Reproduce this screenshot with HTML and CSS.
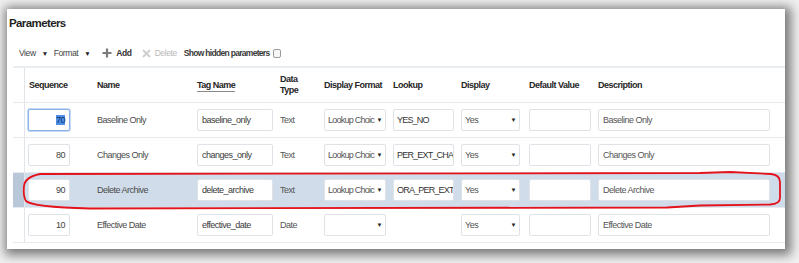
FILE: index.html
```html
<!DOCTYPE html>
<html lang="en">
<head>
    <meta charset="UTF-8">
    <title>Parameters</title>
    <link rel="stylesheet" href="styles.css">
</head>
<body>
    <div class="page">
        <div class="panel">
            <div class="title">Parameters</div>

            <div class="toolbar">
                <span class="menu">View</span>
                <span class="caret">▼</span>
                <span class="menu menu-format">Format</span>
                <span class="caret">▼</span>
                <span class="tool tool-add">
                    <svg width="10" height="10" viewBox="0 0 10 10"><path d="M5 0.5v9M0.5 5h9" stroke="#7b7b7b" stroke-width="2.2"/></svg>
                    Add
                </span>
                <span class="tool tool-delete">
                    <svg width="9" height="9" viewBox="0 0 9 9"><path d="M1 1l7 7M8 1l-7 7" stroke="#cfcfcf" stroke-width="2"/></svg>
                    Delete
                </span>
                <span class="tool tool-hidden">Show hidden parameters</span>
                <span class="checkbox"></span>
            </div>

            <div class="table">
                <div class="row head">
                    <div class="gutter"></div>
                    <div class="th th-seq">Sequence</div>
                    <div class="th">Name</div>
                    <div class="th"><span class="sortable">Tag Name</span></div>
                    <div class="th th-two">Data<br>Type</div>
                    <div class="th">Display Format</div>
                    <div class="th">Lookup</div>
                    <div class="th">Display</div>
                    <div class="th">Default Value</div>
                    <div class="th">Description</div>
                </div>

                <div class="row">
                    <div class="gutter"></div>
                    <div class="cell"><div class="field seq focused"><span class="selected-text">70</span></div></div>
                    <div class="cell name">Baseline Only</div>
                    <div class="cell"><div class="field tag">baseline_only</div></div>
                    <div class="cell type">Text</div>
                    <div class="cell"><div class="field select fmt"><span class="value">Lookup Choic</span><span class="arrow">▼</span></div></div>
                    <div class="cell"><div class="field lookup">YES_NO</div></div>
                    <div class="cell"><div class="field select disp"><span class="value">Yes</span><span class="arrow">▼</span></div></div>
                    <div class="cell"><div class="field def"></div></div>
                    <div class="cell"><div class="field desc">Baseline Only</div></div>
                </div>

                <div class="row">
                    <div class="gutter"></div>
                    <div class="cell"><div class="field seq">80</div></div>
                    <div class="cell name">Changes Only</div>
                    <div class="cell"><div class="field tag">changes_only</div></div>
                    <div class="cell type">Text</div>
                    <div class="cell"><div class="field select fmt"><span class="value">Lookup Choic</span><span class="arrow">▼</span></div></div>
                    <div class="cell"><div class="field lookup">PER_EXT_CHA</div></div>
                    <div class="cell"><div class="field select disp"><span class="value">Yes</span><span class="arrow">▼</span></div></div>
                    <div class="cell"><div class="field def"></div></div>
                    <div class="cell"><div class="field desc">Changes Only</div></div>
                </div>

                <div class="row active">
                    <div class="gutter"></div>
                    <div class="cell"><div class="field seq">90</div></div>
                    <div class="cell name">Delete Archive</div>
                    <div class="cell"><div class="field tag">delete_archive</div></div>
                    <div class="cell type">Text</div>
                    <div class="cell"><div class="field select fmt"><span class="value">Lookup Choic</span><span class="arrow">▼</span></div></div>
                    <div class="cell"><div class="field lookup">ORA_PER_EXT</div></div>
                    <div class="cell"><div class="field select disp"><span class="value">Yes</span><span class="arrow">▼</span></div></div>
                    <div class="cell"><div class="field def"></div></div>
                    <div class="cell"><div class="field desc">Delete Archive</div></div>
                </div>

                <div class="row">
                    <div class="gutter"></div>
                    <div class="cell"><div class="field seq">10</div></div>
                    <div class="cell name">Effective Date</div>
                    <div class="cell"><div class="field tag">effective_date</div></div>
                    <div class="cell type">Date</div>
                    <div class="cell"><div class="field select fmt"><span class="value"></span><span class="arrow">▼</span></div></div>
                    <div class="cell"></div>
                    <div class="cell"><div class="field select disp"><span class="value">Yes</span><span class="arrow">▼</span></div></div>
                    <div class="cell"><div class="field def"></div></div>
                    <div class="cell"><div class="field desc">Effective Date</div></div>
                </div>
            </div>
        </div>

        <!-- hand-drawn highlight around the Delete Archive row -->
        <svg class="markup" width="799" height="263" viewBox="0 0 799 263">
            <path d="M40 174 L700 173 L730 172 L771 174 Q780 175 780 182 L780 198 Q780 204 770 204.5 L700 205.5 L667 207.5 L90 208.5 Q32 207 26 201 Q23 196 24 186 Q25 177 40 174 Z"
                  fill="none" stroke="#e3121b" stroke-width="1.8"/>
        </svg>
    </div>
</body>
</html>
```

FILE: styles.css
```css
* {
    margin: 0;
    padding: 0;
    box-sizing: border-box;
    font-family: 'Liberation Sans', Arial, sans-serif;
}

body {
    background: #f1f1f1;
    overflow: hidden;
}

.page {
    position: relative;
    width: 799px;
    height: 263px;
    padding: 9px 0 0 7px;
}

.panel {
    width: 778px;
    height: 240px;
    background: #ffffff;
    box-shadow: 2px 2px 10px 4px rgba(0, 0, 0, 0.5);
}

.title {
    padding: 7px 0 0 2px;
    font-size: 11.5px;
    line-height: 14px;
    letter-spacing: -0.6px;
    font-weight: bold;
    color: #1f1f1f;
}

/* toolbar */
.toolbar {
    display: flex;
    align-items: center;
    height: 16px;
    margin-top: 15px;
    padding-left: 12px;
    font-size: 8.5px;
    letter-spacing: -0.4px;
    color: #333333;
}

.menu {
    color: #444444;
}

.caret {
    font-size: 6.5px;
    margin-left: 6px;
    color: #222222;
}

.menu-format {
    margin-left: 6px;
}

.tool {
    display: flex;
    align-items: center;
    gap: 4px;
    font-weight: bold;
    color: #333333;
}

.tool-add {
    margin-left: 12px;
}

.tool-delete {
    margin-left: 10px;
    font-weight: normal;
    color: #b8b8b8;
}

.tool-hidden {
    margin-left: 7px;
    letter-spacing: -0.7px;
    color: #3a3a3a;
}

.checkbox {
    width: 8px;
    height: 9px;
    margin-left: 4px;
    border: 1px solid #9a9a9a;
    border-radius: 2px;
    background: #f6f6f6;
}

/* table */
.table {
    margin: 5px 0 0 6px;
}

.row {
    display: grid;
    grid-template-columns: 12px 72px 100px 83px 44px 69px 68px 68px 69px 1fr;
    align-items: center;
    height: 35px;
    border-bottom: 1px solid #e6eaee;
    font-size: 9px;
    letter-spacing: -0.5px;
    color: #444444;
}

.row.head {
    height: 37px;
    border-top: 2px solid #e8edf2;
    border-bottom: 1px solid #e6eaee;
}

.gutter {
    align-self: stretch;
    border-right: 1px solid #e1e5ea;
}

.row.active {
    background: #d0dcea;
}

.row.active .gutter {
    background: #b8c8d9;
}

.th {
    font-weight: bold;
    color: #262626;
}

.th-seq {
    padding-left: 4px;
}

.th-two {
    line-height: 11px;
}

.sortable {
    padding-bottom: 1px;
    border-bottom: 1px solid #8a8a8a;
}

.cell {
    white-space: nowrap;
}

.name {
    color: #4a4a4a;
}

.type {
    color: #555555;
}

.field {
    height: 22px;
    display: flex;
    align-items: center;
    padding: 0 4px;
    background: #ffffff;
    border: 1px solid #dfe3e7;
    border-radius: 2px;
    overflow: hidden;
    white-space: nowrap;
    color: #3a3a3a;
}

.seq {
    width: 42px;
    margin-left: 3px;
    justify-content: flex-end;
    color: #444444;
}

.focused {
    border-color: #8cb2ea;
    box-shadow: 0 0 0 1px #c5d9f5;
}

.selected-text {
    background: #4d8fe6;
    color: #13306e;
}

.tag {
    width: 76px;
}

.select {
    gap: 2px;
    padding: 0 3px;
    color: #555555;
}

.select .value {
    flex: 1;
    min-width: 0;
    overflow: hidden;
}

.fmt .value {
    letter-spacing: -0.75px;
}

.arrow {
    font-size: 6px;
    color: #222222;
}

.fmt {
    width: 62px;
}

.lookup {
    width: 61px;
    padding: 0 1px 0 3px;
    letter-spacing: -0.8px;
    color: #333333;
}

.disp {
    width: 59px;
}

.def {
    width: 62px;
}

.desc {
    width: 172px;
    color: #555555;
}

/* red annotation drawn over the screenshot */
.markup {
    position: absolute;
    top: 0;
    left: 0;
    pointer-events: none;
}
```
